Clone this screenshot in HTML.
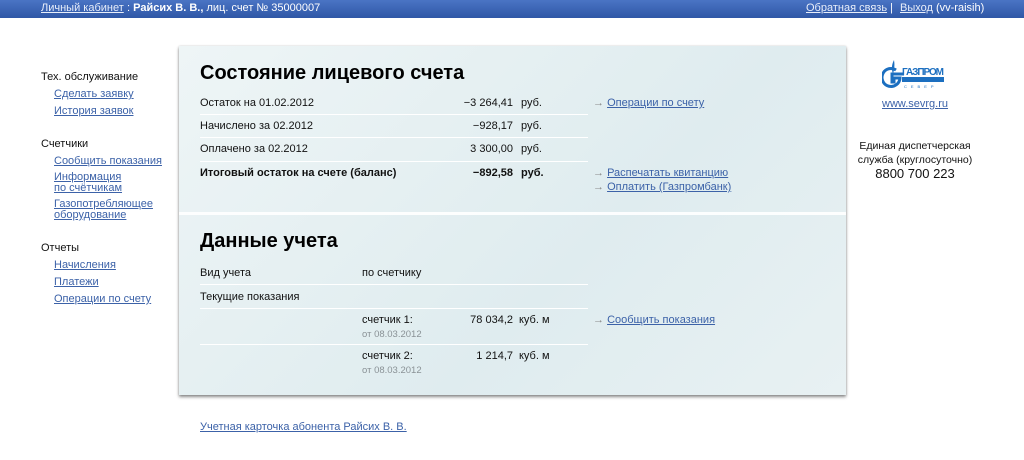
<!DOCTYPE html>
<html><head><meta charset="utf-8"><style>
*{margin:0;padding:0;box-sizing:border-box}
body{width:1024px;height:460px;background:#fff;font-family:"Liberation Sans",sans-serif;font-size:11px;color:#111;position:relative;overflow:hidden}
.a{position:absolute;white-space:nowrap}
a,.l{color:#3c62a8;text-decoration:underline}
.top{position:absolute;left:0;top:0;width:1024px;height:18px;background:linear-gradient(#4a74c4,#2f57a6);color:#fff;font-size:11px}
.top .l{color:#e8eefa}
.panel{position:absolute;left:179px;top:46px;width:667px;height:349px;background:linear-gradient(135deg,#eef5f6,#dfecef 60%,#e8f1f3);box-shadow:0 2px 3px rgba(0,0,0,.45),0 0 2px rgba(0,0,0,.15)}
.hr{position:absolute;height:1px;background:#b9c6cb;border-bottom:1px solid #fff}
h1{position:absolute;font-size:20px;font-weight:bold;color:#000}
.arr{color:#888}
.g{color:#8a9296;font-size:9.5px}
</style></head><body>
<div class="top">
 <span class="a l" style="left:41px;top:2px">Личный кабинет</span>
 <span class="a" style="left:124px;top:2px">&nbsp;: <b>Райсих В. В.,</b> лиц. счет № 35000007</span>
 <span class="a l" style="left:806px;top:2px">Обратная связь</span>
 <span class="a" style="left:890px;top:2px">|</span>
 <span class="a" style="left:900px;top:2px"><span class="l">Выход</span> (vv-raisih)</span>
</div>

<span class="a" style="left:41px;top:71px">Тех. обслуживание</span>
<span class="a l" style="left:54px;top:88px">Сделать заявку</span>
<span class="a l" style="left:54px;top:105px">История заявок</span>
<span class="a" style="left:41px;top:138px">Счетчики</span>
<span class="a l" style="left:54px;top:155px">Сообщить показания</span>
<span class="a l" style="left:54px;top:172px;line-height:11px">Информация<br>по счётчикам</span>
<span class="a l" style="left:54px;top:199px;line-height:11px">Газопотребляющее<br>оборудование</span>
<span class="a" style="left:41px;top:242px">Отчеты</span>
<span class="a l" style="left:54px;top:259px">Начисления</span>
<span class="a l" style="left:54px;top:276px">Платежи</span>
<span class="a l" style="left:54px;top:293px">Операции по счету</span>

<div class="panel">
 <div style="position:absolute;left:0;top:166px;width:667px;height:3px;background:#fff;opacity:.9"></div>
</div>
<h1 style="left:200px;top:62px">Состояние лицевого счета</h1>
<span class="a" style="left:200px;top:97px">Остаток на 01.02.2012</span>
<span class="a" style="left:440px;top:97px;width:73px;text-align:right">−3 264,41</span><span class="a" style="left:521px;top:97px">руб.</span>
<div class="hr" style="left:200px;top:114px;width:388px"></div>
<span class="a" style="left:200px;top:120px">Начислено за 02.2012</span>
<span class="a" style="left:440px;top:120px;width:73px;text-align:right">−928,17</span><span class="a" style="left:521px;top:120px">руб.</span>
<div class="hr" style="left:200px;top:137px;width:388px"></div>
<span class="a" style="left:200px;top:143px">Оплачено за 02.2012</span>
<span class="a" style="left:440px;top:143px;width:73px;text-align:right">3 300,00</span><span class="a" style="left:521px;top:143px">руб.</span>
<div class="hr" style="left:200px;top:161px;width:388px"></div>
<b class="a" style="left:200px;top:167px">Итоговый остаток на счете (баланс)</b>
<b class="a" style="left:440px;top:167px;width:73px;text-align:right">−892,58</b><b class="a" style="left:521px;top:167px">руб.</b>
<span class="a" style="left:593px;top:97px"><span class="arr">→</span> <span class="l">Операции по счету</span></span>
<span class="a" style="left:593px;top:167px"><span class="arr">→</span> <span class="l">Распечатать квитанцию</span></span>
<span class="a" style="left:593px;top:181px"><span class="arr">→</span> <span class="l">Оплатить (Газпромбанк)</span></span>

<h1 style="left:200px;top:230px">Данные учета</h1>
<span class="a" style="left:200px;top:267px">Вид учета</span>
<span class="a" style="left:362px;top:267px">по счетчику</span>
<div class="hr" style="left:200px;top:284px;width:388px"></div>
<span class="a" style="left:200px;top:291px">Текущие показания</span>
<div class="hr" style="left:200px;top:308px;width:388px"></div>
<span class="a" style="left:362px;top:314px">счетчик 1:</span>
<span class="a g" style="left:362px;top:329px">от 08.03.2012</span>
<span class="a" style="left:440px;top:314px;width:73px;text-align:right">78 034,2</span><span class="a" style="left:519px;top:314px">куб. м</span>
<span class="a" style="left:593px;top:314px"><span class="arr">→</span> <span class="l">Сообщить показания</span></span>
<div class="hr" style="left:200px;top:344px;width:388px"></div>
<span class="a" style="left:362px;top:350px">счетчик 2:</span>
<span class="a g" style="left:362px;top:365px">от 08.03.2012</span>
<span class="a" style="left:440px;top:350px;width:73px;text-align:right">1 214,7</span><span class="a" style="left:519px;top:350px">куб. м</span>

<span class="a l" style="left:200px;top:421px">Учетная карточка абонента Райсих В. В.</span>

<svg class="a" style="left:882px;top:58px" width="64" height="34" viewBox="0 0 64 34">
 <path d="M12 2c-2 4-3 8-1 14 1-4 2-8 1-14z" fill="#1c6fc0"/>
 <path d="M14 12a9 9 0 1 0 4 8h-6v4h-2v-8h12" fill="none" stroke="#1c6fc0" stroke-width="3"/>
 <text x="20" y="17" font-family="Liberation Sans" font-weight="bold" font-size="10" fill="#1c6fc0" textLength="42">ГАЗПРОМ</text>
 <rect x="20" y="19" width="42" height="5" fill="#1c6fc0"/>
 <text x="22" y="30" font-family="Liberation Sans" font-size="4" fill="#1c6fc0" letter-spacing="4">СЕВЕР</text>
</svg>
<span class="a l" style="left:882px;top:98px">www.sevrg.ru</span>
<span class="a" style="left:855px;top:139px;width:120px;text-align:center;font-size:10.5px;line-height:14px;white-space:normal">Единая диспетчерская служба (круглосуточно)</span>
<span class="a" style="left:855px;top:166px;width:120px;text-align:center;font-size:13px">8800 700 223</span>
</body></html>
